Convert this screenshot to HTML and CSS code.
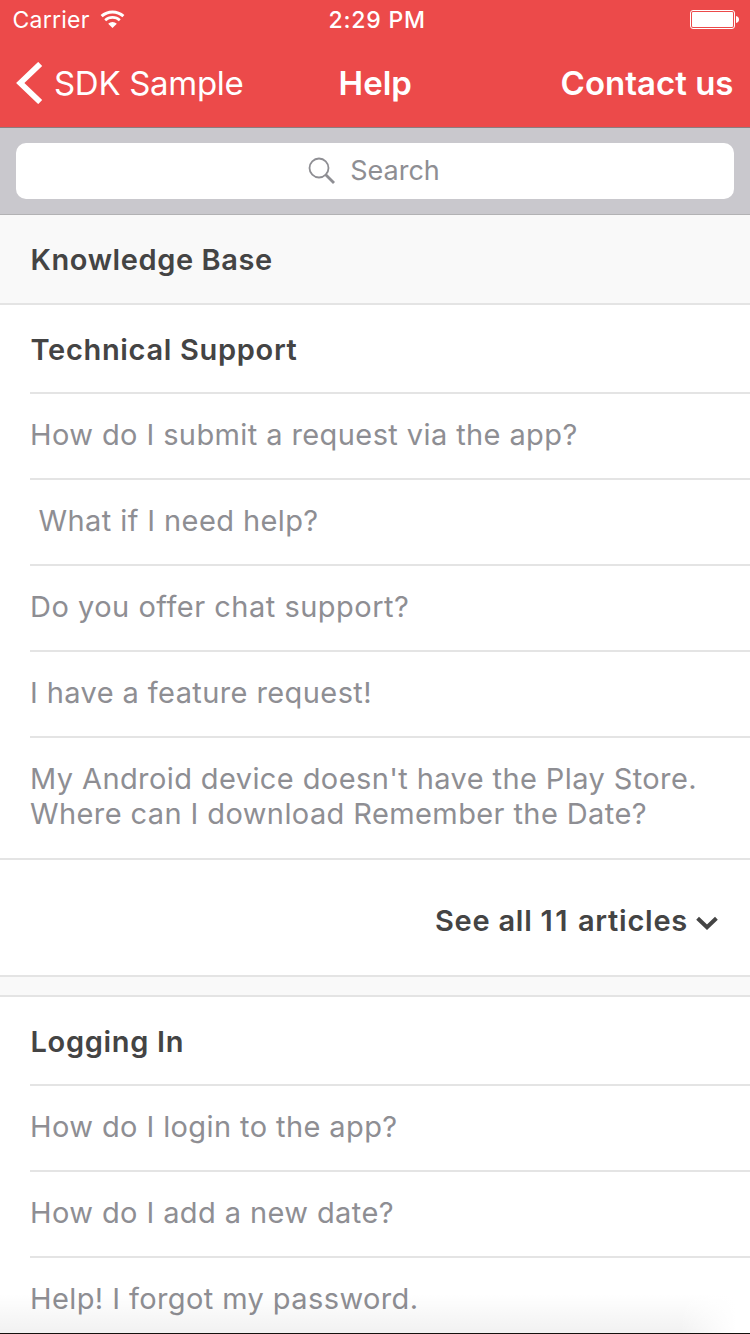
FILE: index.html
```html
<!DOCTYPE html>
<html lang="en">
<head>
<meta charset="utf-8">
<title>Help</title>
<link rel="stylesheet" href="styles.css">
</head>
<body>
<div class="screen">
  <header class="header">
    <div class="status">
      <div class="status-left">
        <span class="carrier">Carrier</span>
        <svg class="wifi" width="26" height="20" viewBox="0 0 26 20">
          <path d="M1.600 6.200A16.200 16.200 0 0 1 23.400 6.200" fill="none" stroke="#fff" stroke-width="3"/>
          <path d="M5.200 10.200A10.800 10.800 0 0 1 19.800 10.200" fill="none" stroke="#fff" stroke-width="2.700"/>
          <path d="M12.500 18L8.200 13.700A6.200 6.200 0 0 1 16.800 13.700Z" fill="#fff"/>
        </svg>
      </div>
      <span class="time">2:29 PM</span>
      <svg class="battery" width="50" height="20" viewBox="0 0 50 20">
        <rect x=".5" y=".5" width="44" height="18" rx="2.500" fill="none" stroke="#fff"/>
        <rect x="2" y="2" width="41" height="15" rx="1" fill="#fff"/>
        <path d="M46 6C50 6.500 50 12.500 46 13Z" fill="#fff"/>
      </svg>
    </div>
    <nav class="nav">
      <a class="back">
        <svg width="27" height="42" viewBox="0 0 27 42"><path d="M24.200 2L4.300 21L24.200 40" fill="none" stroke="#fff" stroke-width="5.800"/></svg>
        <span class="back-label">SDK Sample</span>
      </a>
      <h1 class="title">Help</h1>
      <a class="contact">Contact us</a>
    </nav>
  </header>
  <div class="search-bar">
    <div class="search-field">
      <svg class="search-icon" width="28" height="28" viewBox="0 0 28 28" fill="none" stroke="#8e8e93"><circle cx="11" cy="11" r="9.500" stroke-width="1.800"/><path d="M17.500 17.500L26 26" stroke-width="2.800"/></svg>
      <span class="placeholder">Search</span>
    </div>
  </div>
  <main class="content">
    <h2 class="kb">Knowledge Base</h2>
    <section>
      <h3 class="section-title">Technical Support</h3>
      <ul class="articles">
        <li>How do I submit a request via the app?</li>
        <li>&nbsp;What if I need help?</li>
        <li class="wide">Do you offer chat support?</li>
        <li>I have a feature request!</li>
        <li class="two-line">My Android device doesn't have the Play Store.<br>Where can I download Remember the Date?</li>
      </ul>
      <div class="see-all">
        <span class="see-label">See all <span class="count">11</span> articles</span>
        <svg class="chevron" width="22" height="15" viewBox="0 0 22 15"><path d="M1.600 2.300L11 11.300L20.400 2.300" fill="none" stroke="#444" stroke-width="4"/></svg>
      </div>
    </section>
    <div class="gap"></div>
    <section>
      <h3 class="section-title">Logging In</h3>
      <ul class="articles">
        <li>How do I login to the app?</li>
        <li>How do I add a new date?</li>
        <li>Help! I forgot my password.</li>
      </ul>
    </section>
  </main>
  <div class="bottom-shade"></div>
</div>
</body>
</html>
```
FILE: styles.css
```css
* { box-sizing: border-box; }
body { margin: 0; font-family: Inter, "Liberation Sans", sans-serif; }
h1, h2, h3, ul { margin: 0; padding: 0; list-style: none; }
.screen { position: relative; width: 750px; height: 1334px; overflow: hidden; background: #fff; }
.header { height: 128px; background: #ec4a4a; border-bottom: 1px solid #8c7d80; color: #fff; }
.status { display: grid; grid-template-columns: 1fr auto 1fr; height: 40px; align-items: center; padding: 0 10px 0 12.5px; font-size: 23px; }
.status-left { display: flex; align-items: center; gap: 10px; }
.carrier { letter-spacing: .25px; }
.time { padding-left: 2px; font-weight: 500; letter-spacing: .8px; }
.battery { justify-self: end; }
.nav { display: grid; grid-template-columns: 1fr auto 1fr; align-items: center; height: 85px; padding: 0 16.5px 0 16px; font-size: 33px; line-height: 40px; }
.back { display: flex; align-items: center; gap: 11px; white-space: nowrap; }
.back-label { letter-spacing: -.3px; }
.title { padding-left: 1px; font-size: 33px; font-weight: 600; }
.contact { justify-self: end; font-weight: 600; white-space: nowrap; }
.search-bar { height: 87px; padding: 15px 16px; background: #c9c8cd; border-bottom: 1px solid #b2b2b4; }
.search-field { display: flex; align-items: center; justify-content: center; gap: 14px; height: 56px; padding: 0 2px 1px 0; border-radius: 10px; background: #fff; color: #8e8e93; font-size: 27px; }
.search-icon { margin-top: 1px; }
.kb { height: 90px; padding: 0 30.5px; background: #f9f9f9; border-bottom: 2px solid #e4e4e4; color: #444; font-size: 29px; font-weight: 600; line-height: 89px; letter-spacing: .6px; }
.section-title { height: 87px; padding-left: 30.5px; color: #444; font-size: 29px; font-weight: 600; line-height: 89px; letter-spacing: .68px; }
.articles { color: #8e8e93; font-size: 29px; line-height: 35px; letter-spacing: .4px; }
.articles li { height: 86px; margin-left: 30px; border-top: 2px solid #e4e4e4; padding-top: 23px; white-space: nowrap; }
.articles .wide { letter-spacing: .5px; }
.articles .two-line { height: 122px; }
.see-all { display: flex; align-items: center; justify-content: flex-end; gap: 8px; height: 119px; padding: 6px 32px 0 0; border-top: 2px solid #e4e4e4; border-bottom: 2px solid #e4e4e4; color: #444; font-size: 29px; font-weight: 600; }
.see-label { letter-spacing: .75px; }
.count { letter-spacing: 2.4px; }
.chevron { margin-top: 5px; }
.gap { height: 20px; background: #f9f9f9; border-bottom: 2px solid #e4e4e4; }
.bottom-shade { position: absolute; left: 0; right: 0; bottom: 0; height: 40px; border-bottom: 1px solid #15110d; background: linear-gradient(to bottom, rgba(0,0,0,0), rgba(0,0,0,.055)) padding-box; }
.bottom-shade::after { content: ""; position: absolute; right: 0; bottom: 0; width: 70px; height: 39px; background: linear-gradient(to right, rgba(255,255,255,0), #fff 80%); }
```
